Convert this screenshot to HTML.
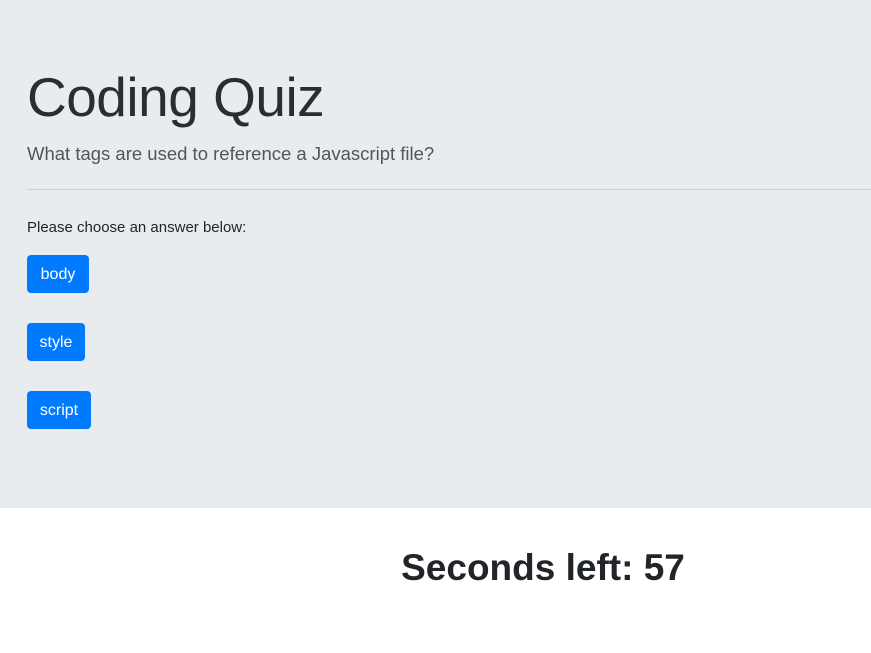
<!DOCTYPE html>
<html><head><meta charset="utf-8"><style>
*{margin:0;padding:0;box-sizing:border-box}
body{width:871px;height:653px;background:#fff;font-family:"Liberation Sans",sans-serif;color:#212529;position:relative;overflow:hidden}
.jum{position:absolute;left:0;top:0;width:871px;height:508px;background:#e9ecef}
h1{position:absolute;left:27px;top:64px;font-size:55px;font-weight:300;line-height:1.2;letter-spacing:-0.5px;color:#2a2e33}
.lead{position:absolute;left:27px;top:143px;font-size:18.5px;font-weight:300;color:#50565c}
hr{position:absolute;left:27px;top:189px;width:844px;border:0;border-top:1px solid #ccd0d4}
.p{position:absolute;left:27px;top:219px;font-size:15px}
.btn{position:absolute;left:27px;height:38px;background:#007bff;color:#fff;border-radius:4px;font-size:16px;line-height:40px;text-align:center}
h2{position:absolute;left:0;width:1086px;text-align:center;top:547px;font-size:37px;font-weight:700;color:#212529}
</style></head><body>
<div class="jum">
<h1>Coding Quiz</h1>
<div class="lead">What tags are used to reference a Javascript file?</div>
<hr>
<div class="p">Please choose an answer below:</div>
<div class="btn" style="top:255px;width:62px">body</div>
<div class="btn" style="top:323px;width:58px">style</div>
<div class="btn" style="top:391px;width:64px">script</div>
</div>
<h2>Seconds left: 57</h2>
</body></html>
